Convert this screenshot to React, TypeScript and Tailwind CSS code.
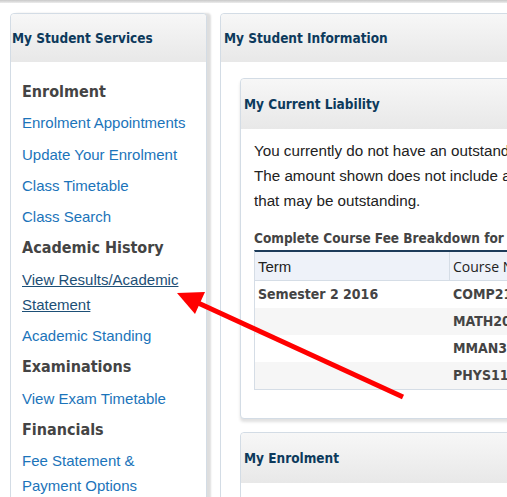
const headFont = { fontFamily: '"DejaVu Sans Condensed", "DejaVu Sans", Verdana, sans-serif' };

type NavItem = { kind: "heading" | "link"; label: string; active?: boolean };

const navItems: NavItem[] = [
  { kind: "heading", label: "Enrolment" },
  { kind: "link", label: "Enrolment Appointments" },
  { kind: "link", label: "Update Your Enrolment" },
  { kind: "link", label: "Class Timetable" },
  { kind: "link", label: "Class Search" },
  { kind: "heading", label: "Academic History" },
  { kind: "link", label: "View Results/Academic Statement", active: true },
  { kind: "link", label: "Academic Standing" },
  { kind: "heading", label: "Examinations" },
  { kind: "link", label: "View Exam Timetable" },
  { kind: "heading", label: "Financials" },
  { kind: "link", label: "Fee Statement & Payment Options" },
];

const feeRows = [
  { term: "Semester 2 2016", course: "COMP2121" },
  { term: "", course: "MATH2089" },
  { term: "", course: "MMAN3000" },
  { term: "", course: "PHYS1160" },
];

const PanelHeader = ({ title, className = "" }: { title: string; className?: string }) => (
  <div
    className={`flex items-center bg-gradient-to-b from-[#f7f7f7] to-[#e8e8e8] text-[13.5px] font-bold text-[#0d3a5c] ${className}`}
    style={headFont}
  >
    {title}
  </div>
);

const App = () => {
  return (
    <div
      className="relative h-[497px] w-[507px] overflow-hidden bg-white"
      style={{ fontFamily: '"Liberation Sans", Arial, sans-serif' }}
    >
      {/* top page edge */}
      <div className="h-[3px] bg-gradient-to-b from-[#c8c8c8] to-[#ededed]" />

      <div className="flex items-start gap-[13px] pl-[10px] pt-[10px]">
        {/* My Student Services */}
        <div className="h-[520px] w-[197px] shrink-0 rounded-t-[4px] border border-[#d3dce5] bg-white shadow-[4px_0_2px_rgba(0,0,0,0.13)]">
          <PanelHeader title="My Student Services" className="h-[48px] rounded-t-[4px] pl-[1px]" />
          <div className="pl-[11px] pt-[17px]">
            {navItems.map((item) =>
              item.kind === "heading" ? (
                <div
                  key={item.label}
                  className="mb-[6.3px] text-[16px] font-bold leading-[25px] text-[#444]"
                  style={headFont}
                >
                  {item.label}
                </div>
              ) : (
                <div key={item.label} className="mb-[6.3px] pr-[14px] text-[15px] leading-[25px]">
                  <a
                    href="#"
                    className={item.active ? "text-[#1d4f76] underline" : "text-[#1b74ba]"}
                  >
                    {item.label}
                  </a>
                </div>
              )
            )}
          </div>
        </div>

        {/* My Student Information */}
        <div className="h-[520px] w-[330px] shrink-0 rounded-t-[4px] border border-[#d3dce5] bg-white">
          <PanelHeader title="My Student Information" className="h-[48px] rounded-t-[4px] pl-[3px]" />
          <div className="pl-[19px] pt-[16px]">
            {/* My Current Liability */}
            <div className="rounded-[4px] border border-[#d3dce5] bg-white shadow-[0_3px_3px_rgba(0,0,0,0.12)]">
              <PanelHeader title="My Current Liability" className="h-[50px] rounded-t-[4px] pl-[3px]" />
              <div className="pb-[28px] pl-[13px] pt-[9px]">
                <p className="whitespace-nowrap text-[15.2px] leading-[25px] text-[#222]">
                  You currently do not have an outstanding liability.
                  <br />
                  The amount shown does not include any fees
                  <br />
                  that may be outstanding.
                </p>
                <div
                  className="mt-[15px] whitespace-nowrap text-[13.5px] font-bold leading-[20px] text-[#444]"
                  style={headFont}
                >
                  Complete Course Fee Breakdown for Semester 2 2016
                </div>
                <div className="mt-[2px] border-b border-l border-t-2 border-[#d5dde6] border-t-[#1d3c5a]">
                  <div className="flex h-[29px] items-center border-b border-[#d5dde6] bg-[#eef2f9] text-[15px] text-[#222]">
                    <div className="w-[195px] shrink-0 border-r border-[#d5dde6] pl-[3px] leading-[29px]">
                      Term
                    </div>
                    <div className="pl-[3px]" style={{ fontFamily: '"Open Sans", sans-serif', fontSize: 14 }}>
                      Course Name
                    </div>
                  </div>
                  {feeRows.map((row, i) => (
                    <div
                      key={row.course}
                      className={`flex h-[27px] items-center text-[14px] font-bold text-[#444] ${
                        i % 2 === 1 ? "bg-[#f6f6f6]" : "bg-white"
                      }`}
                      style={headFont}
                    >
                      <div className="w-[195px] shrink-0 pl-[3px]">{row.term}</div>
                      <div className="pl-[3px]">{row.course}</div>
                    </div>
                  ))}
                </div>
              </div>
            </div>

            {/* My Enrolment */}
            <div className="mt-[13px] rounded-[4px] border border-[#d3dce5] bg-white">
              <PanelHeader title="My Enrolment" className="h-[50px] rounded-t-[4px] pl-[3px]" />
              <div className="h-[60px]" />
            </div>
          </div>
        </div>
      </div>

      {/* red annotation arrow */}
      <svg className="pointer-events-none absolute left-0 top-0" width="507" height="497">
        <line x1="403" y1="397" x2="196" y2="302" stroke="#ff0000" strokeWidth="5" />
        <polygon points="177,293 205,292 195,314" fill="#ff0000" />
      </svg>
    </div>
  );
};

export default App;
